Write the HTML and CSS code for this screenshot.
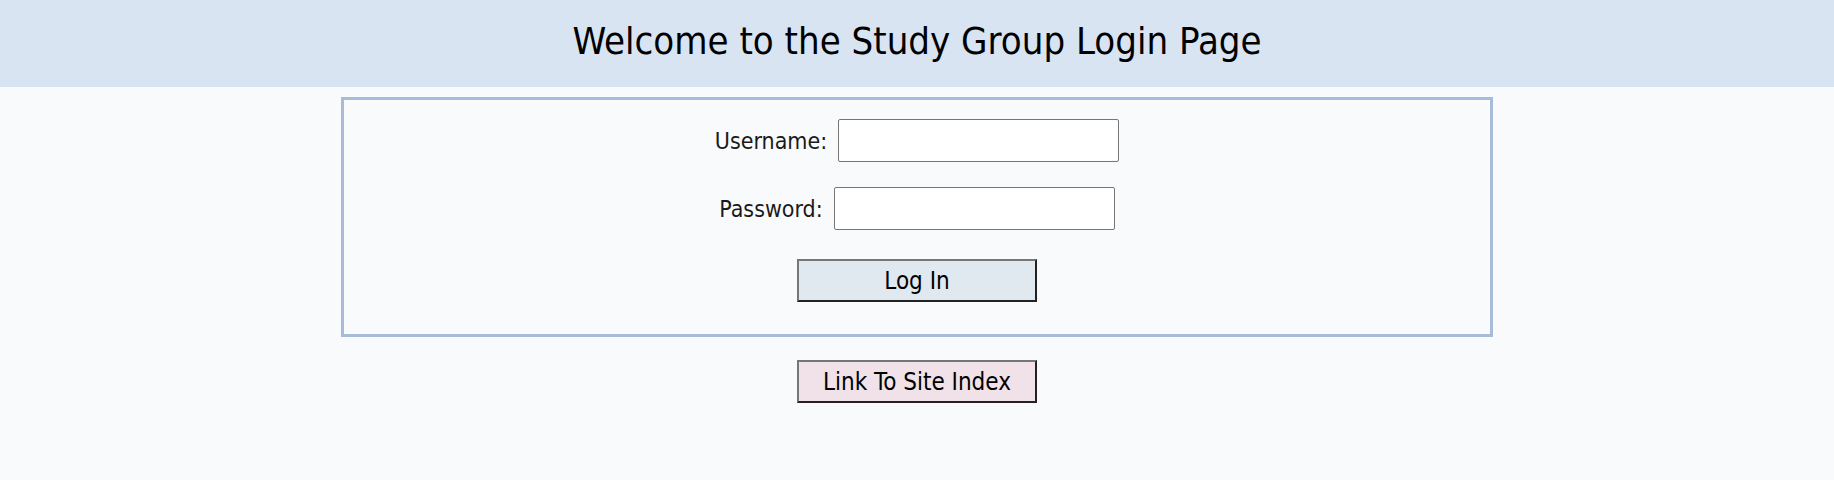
FILE: index.html
```html
<!DOCTYPE html>
<html lang="en">
<head>
<meta charset="utf-8">
<title>Study Group Login</title>
<link rel="stylesheet" href="styles.css">
</head>
<body>
<header class="page-header">
  <h1 class="page-title">Welcome to the Study Group Login Page</h1>
</header>
<main class="page-main">
  <form class="login-box">
    <div class="field-row">
      <label class="field-label" for="username">Username:</label>
      <input class="field-input" id="username" type="text">
    </div>
    <div class="field-row">
      <label class="field-label" for="password">Password:</label>
      <input class="field-input" id="password" type="password">
    </div>
    <div class="action-row">
      <button class="btn btn-login" type="button">Log In</button>
    </div>
  </form>
  <button class="btn btn-index" type="button">Link To Site Index</button>
</main>
</body>
</html>
```

FILE: styles.css
```css
html, body {
  margin: 0;
  padding: 0;
}

body {
  background: #f9fafc;
  color: #111;
  font-family: "DejaVu Sans Condensed", "DejaVu Sans", Verdana, sans-serif;
  font-stretch: condensed;
}

.page-header {
  background: #d9e4f2;
  height: 87px;
  display: flex;
  align-items: center;
  justify-content: center;
}

.page-title {
  margin: 0;
  font-size: 38px;
  font-weight: normal;
  line-height: 1;
  color: #000;
  padding-bottom: 6px;
}

.page-main {
  display: flex;
  flex-direction: column;
  align-items: center;
}

.login-box {
  box-sizing: border-box;
  width: 1152px;
  margin-top: 10px;
  border: 3px solid #a8bbd8;
  padding: 19px 0 32px;
  display: flex;
  flex-direction: column;
  align-items: center;
}

.field-row {
  display: flex;
  align-items: center;
  gap: 11px;
  margin-bottom: 25px;
}

.field-row + .field-row {
  margin-bottom: 29px;
}

.field-label {
  font-size: 23px;
  color: #1a1a1a;
}

.field-input {
  box-sizing: border-box;
  width: 281px;
  height: 43px;
  border: 1px solid #767676;
  border-radius: 2px;
  background: #fff;
  margin: 0;
  padding: 2px 4px;
  font-size: 20px;
}

.btn {
  box-sizing: border-box;
  width: 240px;
  height: 43px;
  margin: 0;
  padding: 0;
  border-width: 2px;
  border-style: solid;
  border-color: #767676 #222 #222 #767676;
  font-family: inherit;
  font-stretch: condensed;
  font-size: 24px;
  color: #000;
  cursor: pointer;
}

.btn-login {
  background: #e1e9f0;
}

.btn-index {
  margin-top: 23px;
  background: #f0e2e8;
}
```
